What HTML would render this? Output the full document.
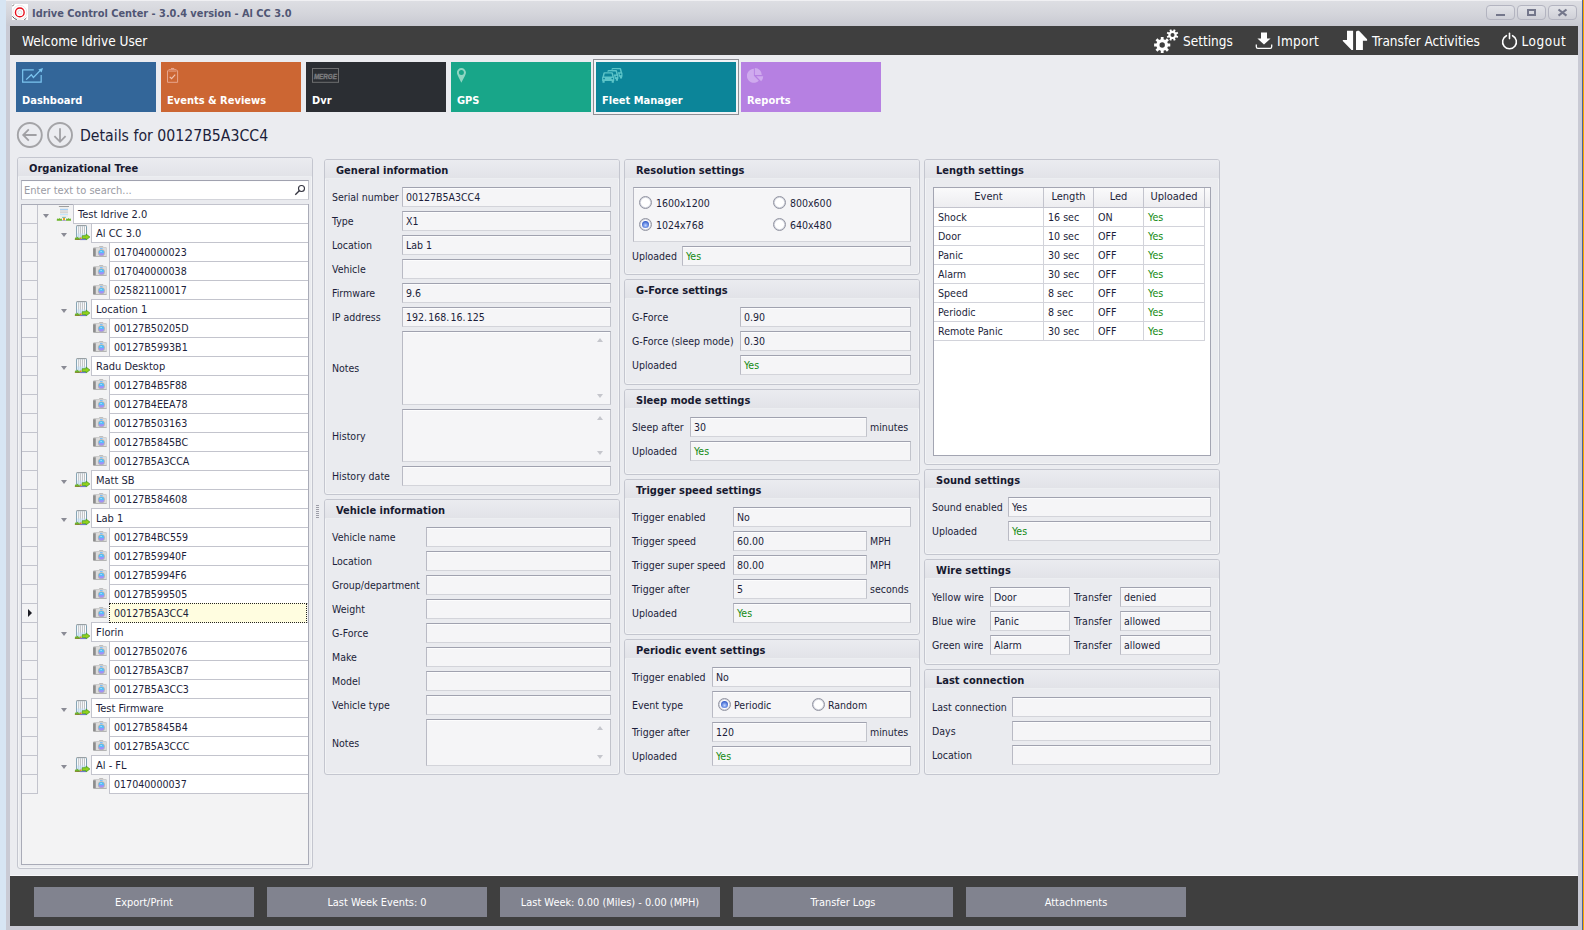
<!DOCTYPE html>
<html lang="en"><head><meta charset="utf-8"><title>Idrive Control Center</title>
<style>
*{box-sizing:border-box}
html,body{margin:0;padding:0}
body{width:1584px;height:930px;overflow:hidden;background:#d7e5f3;position:relative;font-family:'DejaVu Sans Condensed','Liberation Sans',sans-serif;font-size:10.5px;color:#1c1e3a;-webkit-font-smoothing:antialiased}
.abs,.abs *{position:absolute}
#win{position:absolute;left:6px;top:0;width:1576px;height:930px;background:#c9cad4}
#titlebar{position:absolute;left:6px;top:0;width:1576px;height:26px;background:linear-gradient(#f0f0f3 0,#f0f0f3 1px,#dddee3 1px,#d4d5db 14px,#c8c9d1 26px)}
#edgeR1{position:absolute;left:1582px;top:0;width:1px;height:930px;background:#51649a}
#edgeR2{position:absolute;left:1583px;top:0;width:1px;height:930px;background:#f7a800}
#title{position:absolute;left:32px;top:6px;height:16px;line-height:16px;font-weight:bold;font-size:10.9px;color:#505674;white-space:nowrap}
.wb{position:absolute;top:5px;width:29px;height:15px;border:1px solid #b3b4c0;border-radius:4px;background:linear-gradient(#e2e3e8,#cfd0d7)}
#hdr{position:absolute;left:10px;top:26px;width:1568px;height:29px;background:#3f3f3f}
#hdr span{position:absolute;color:#fff;font-size:13.5px;line-height:20px;top:5px;white-space:nowrap}
#content{position:absolute;left:10px;top:55px;width:1568px;height:821px;background:#ebecf0;border-bottom:1px solid #f7f7fa}
#foot{position:absolute;left:10px;top:876px;width:1568px;height:50px;background:#3f3f3f}
.fb{position:absolute;top:11px;width:220px;height:30px;background:#81838f;color:#fff;text-align:center;line-height:32px;font-size:10.9px;white-space:nowrap}
.tile{position:absolute;top:62px;width:140px;height:50px}
.tile b{position:absolute;left:6px;top:31px;line-height:16px;color:#fff;font-size:11px;white-space:nowrap}
.tile svg{position:absolute;left:6px;top:5px}
.panel{position:absolute;border:1px solid #c4c6cf;border-radius:3px;background:#eaebef;box-shadow:inset 0 0 0 1px rgba(255,255,255,.4)}
.panel>.ph{position:absolute;left:0;top:0;right:0;height:19px;background:linear-gradient(#ebecf0,#e2e3e8);border-radius:2px 2px 0 0;border-bottom:1px solid #eceef1}
.panel>.ph b{position:absolute;left:11px;top:3px;line-height:15px;font-size:11px;white-space:nowrap;color:#17192f}
.l{position:absolute;line-height:20px;height:20px;white-space:nowrap}
.i{position:absolute;height:20px;line-height:18px;padding-left:3px;background:#f5f5f7;border:1px solid #b9bac4;border-top-color:#a0a2af;border-right-color:#c1c3cb;border-bottom-color:#d3d4da;box-shadow:inset 0 1px 0 #fcfcfd;white-space:nowrap;overflow:hidden}
.g{color:#128a12}
.box{position:absolute;background:#f5f5f7;border:1px solid #b9bac4;border-top-color:#a0a2af;border-right-color:#c1c3cb;border-bottom-color:#d3d4da;box-shadow:inset 0 1px 0 #fcfcfd}
.sa{position:absolute;width:0;height:0;border-left:3.500px solid transparent;border-right:3.500px solid transparent}
.sa.u{border-bottom:4px solid #c5c6cc}
.sa.d{border-top:4px solid #c5c6cc}
.radio{position:absolute;width:13px;height:13px;border-radius:50%;border:1px solid #9294a1;background:radial-gradient(circle,#fff 0,#fff 52%,#d3d5de 66%,#dfe0e7 85%,#e9eaee 100%)}
.radio.on::after{content:"";position:absolute;left:2px;top:2px;width:7px;height:7px;border-radius:50%;background:radial-gradient(circle at 50% 62%,#c9d9fa 0,#7fa0ec 30%,#3a62cc 68%,#2b4bb0 100%)}
</style></head>
<body>
<svg width="0" height="0" style="position:absolute"><symbol id="cam" viewBox="0 0 15 13"><defs><linearGradient id="lg" x1="0" y1="0" x2="0" y2="1"><stop offset="0" stop-color="#45c2fa"/><stop offset="0.550" stop-color="#5fbcf8"/><stop offset="0.650" stop-color="#a08ef8"/><stop offset="1" stop-color="#a890f5"/></linearGradient></defs><rect x="6.100" y="0.900" width="4.100" height="2" rx="0.500" fill="#bdbdbd"/><rect x="0.100" y="2.100" width="13.800" height="9.800" rx="1.300" fill="#cdcdcd"/><rect x="3" y="3" width="10.200" height="8" rx="1" fill="#dcdcdc"/><rect x="0.100" y="3.300" width="2.600" height="7.900" fill="#8c8c8c"/><rect x="7" y="3" width="2.600" height="1" fill="#7cc0fb"/><rect x="0.400" y="11.300" width="13.300" height="0.700" fill="#a9a9a9"/><circle cx="8.400" cy="7.800" r="3.500" fill="#b3b3b3"/><circle cx="8.400" cy="7.800" r="2.700" fill="url(#lg)"/><rect x="7.300" y="6.400" width="1.600" height="0.600" fill="#d8f0ff"/></symbol><symbol id="loc" viewBox="0 0 17 16"><rect x="2.600" y="0.700" width="9.900" height="13.600" rx="0.800" fill="#e4f0fc" stroke="#6f94a6" stroke-width="0.900"/><path d="M2.600 0.700H12.500" stroke="#9c9c9c" stroke-width="0.900"/><path d="M3.700 1.400V13.500M5.650 1.400V13.500M7.600 1.400V13.500M9.550 1.400V13.500M11.500 1.400V13.500" stroke="#ffffff" stroke-width="0.900"/><path d="M4.700 1.400V13.500M6.600 1.400V13.500M8.600 1.400V13.500M10.500 1.400V13.500" stroke="#bcbcbc" stroke-width="0.900"/><rect x="3.100" y="8.500" width="8.900" height="5" fill="#bfe0fb" opacity="0.550"/><path d="M6 14.600H12" stroke="#6a6ad0" stroke-width="0.900"/><path d="M0.900 14.800V13.300L1.800 12.200L2.600 13L3.400 11.600L4.400 12.900L5.200 12.300L5.800 13.400V14.800z" fill="#6cb52a"/><path d="M0.900 14.300H5.800V14.900H0.900z" fill="#8a6a20"/><rect x="6" y="12.500" width="1.600" height="1.600" fill="#e88a1c"/><path d="M8.200 10.700H12.100V9.100L15.900 12L12.100 14.900V13.500H8.200z" fill="#93d11b" stroke="#3f9a1b" stroke-width="0.700" stroke-linejoin="round"/></symbol><symbol id="root" viewBox="0 0 16 16"><rect x="4" y="0.800" width="8" height="10.200" fill="#e7e7e7"/><path d="M2.900 0.450H13" stroke="#8f8f8f" stroke-width="0.900"/><path d="M4 3.400H12" stroke="#a2cef6" stroke-width="1.100"/><path d="M4 5H12M4 6.500H12" stroke="#cfcfcf" stroke-width="0.800"/><path d="M4 8.500H12" stroke="#c3e3fa" stroke-width="1.100"/><path d="M4 1.900H12M4 10H12" stroke="#f4f4f4" stroke-width="0.800"/><path d="M6.200 11.400H9.800" stroke="#6fb6b0" stroke-width="1"/><rect x="7" y="12" width="2" height="2.600" fill="#e8a020"/><path d="M0.800 14.800V13.400L1.700 12.300L2.500 13.100L3.400 12L4.300 13.100L5.200 12.300L6 13.400V14.800z" fill="#6cb52a"/><path d="M10 14.800V13.400L10.800 12.300L11.700 13.100L12.600 12L13.500 13.100L14.300 12.300L15 13.400V14.800z" fill="#6cb52a"/><path d="M6 14.500H10" stroke="#9a9ad8" stroke-width="0.700"/></symbol></svg>
<div id="win"></div><div id="titlebar"></div><div id="edgeR1"></div><div id="edgeR2"></div>
<svg style="position:absolute;left:12px;top:4px" width="16" height="16" viewBox="0 0 16 16"><rect width="16" height="16" fill="#fff"/><circle cx="7.800" cy="8.300" r="7" fill="none" stroke="#d6d6d9" stroke-width="0.600"/><path d="M0.300 2.300L1.900 0.500M0.400 12.300Q2.200 15 4.800 15.700M12.300 15.600Q13.600 14.900 14.300 14" fill="none" stroke="#4a4a4a" stroke-width="0.900"/><circle cx="7.800" cy="8.400" r="4.350" fill="none" stroke="#e8101c" stroke-width="1.400"/><circle cx="7.800" cy="8.400" r="1.900" fill="none" stroke="#d3d3d8" stroke-width="0.700"/></svg>
<div id="title">Idrive Control Center - 3.0.4 version - Al CC 3.0</div>
<div class="wb" style="left:1486px"><svg width="27" height="13" style="position:absolute;left:0;top:0"><rect x="9" y="8" width="9" height="2" fill="#74778b"/></svg></div>
<div class="wb" style="left:1517px"><svg width="27" height="13" style="position:absolute;left:0;top:0"><rect x="10" y="4" width="7" height="5" fill="none" stroke="#74778b" stroke-width="2"/></svg></div>
<div class="wb" style="left:1548px"><svg width="27" height="13" style="position:absolute;left:0;top:0"><path d="M9.500 3.500L17.500 9.700M17.500 3.500L9.500 9.700" stroke="#74778b" stroke-width="2.200" fill="none"/></svg></div>
<div id="hdr"><span style="left:12px">Welcome Idrive User</span>
<span style="left:1173px">Settings</span><span style="left:1267px;letter-spacing:0.3px">Import</span><span style="left:1362px">Transfer Activities</span><span style="left:1511.500px;letter-spacing:0.55px">Logout</span>
<svg style="position:absolute;left:1143px;top:2px" width="26" height="26" viewBox="0 0 26 26"><g fill="#fff">
<path fill-rule="evenodd" d="M17.28 15.59 L17.28 18.41 L14.94 18.38 L14.23 20.08 L15.91 21.72 L13.92 23.71 L12.28 22.03 L10.58 22.74 L10.61 25.08 L7.79 25.08 L7.82 22.74 L6.12 22.03 L4.48 23.71 L2.49 21.72 L4.17 20.08 L3.46 18.38 L1.12 18.41 L1.12 15.59 L3.46 15.62 L4.17 13.92 L2.49 12.28 L4.48 10.29 L6.12 11.97 L7.82 11.26 L7.79 8.92 L10.61 8.92 L10.58 11.26 L12.28 11.97 L13.92 10.29 L15.91 12.28 L14.23 13.92 L14.94 15.62Z M6.50 17.00 a2.70 2.70 0 1 0 5.40 0 a2.70 2.70 0 1 0 -5.40 0Z"/>
<path fill-rule="evenodd" d="M25.26 8.19 L24.48 10.06 L22.90 9.37 L21.97 10.30 L22.66 11.88 L20.79 12.66 L20.16 11.05 L18.84 11.05 L18.21 12.66 L16.34 11.88 L17.03 10.30 L16.10 9.37 L14.52 10.06 L13.74 8.19 L15.35 7.56 L15.35 6.24 L13.74 5.61 L14.52 3.74 L16.10 4.43 L17.03 3.50 L16.34 1.92 L18.21 1.14 L18.84 2.75 L20.16 2.75 L20.79 1.14 L22.66 1.92 L21.97 3.50 L22.90 4.43 L24.48 3.74 L25.26 5.61 L23.65 6.24 L23.65 7.56Z M17.50 6.90 a2.00 2.00 0 1 0 4.00 0 a2.00 2.00 0 1 0 -4.00 0Z"/>
</g></svg>
<svg style="position:absolute;left:1245px;top:6px" width="18" height="18" viewBox="0 0 18 18"><path d="M6 0.5h6v6h3.6L9 12.6 2.4 6.5H6z" fill="#fff"/><path d="M1.3 12.5v2.3q0 1.6 1.6 1.6h12.2q1.6 0 1.6-1.6v-2.3" fill="none" stroke="#fff" stroke-width="1.3"/></svg>
<svg style="position:absolute;left:1332px;top:4px" width="26" height="22" viewBox="0 0 26 22"><path d="M5 0.800h6.100V20H9.500L0.800 11V9.900H5z" fill="#fff"/><path d="M14 20V1.500L15.500 0.800H17L25.100 9.300V10.800H20.900V20z" fill="#fff"/></svg>
<svg style="position:absolute;left:1491px;top:6px" width="18" height="18" viewBox="0 0 18 18"><path d="M5.400 3.700A6.900 6.900 0 1 0 11.600 3.700" fill="none" stroke="#fff" stroke-width="1.600" stroke-linecap="round"/><path d="M8.500 1.400v5.200" stroke="#fff" stroke-width="1.600" stroke-linecap="round"/></svg>
</div>
<div id="content"></div>
<div style="position:absolute;left:593px;top:59px;width:146px;height:56px;border:1px solid #8d8e94;background:#f2f3f6"></div>
<div class="tile" style="left:16px;background:#336699"><svg width="24" height="18" viewBox="0 0 24 18"><path d="M11.800 2.800H0.660V15.200H19.160V8" fill="none" stroke="#7cc5f0" stroke-width="1.200"/><path d="M4.200 12.600L9.300 7.700L11.400 10.500L18.600 3.100" fill="none" stroke="#7cc5f0" stroke-width="1.300"/><path d="M21 0.900L16.300 2.400L19.600 5.400z" fill="#7cc5f0"/></svg><b>Dashboard</b></div>
<div class="tile" style="left:161px;background:#cc6633"><svg width="14" height="18" viewBox="0 0 14 18"><path d="M1.800 2.700H9.300L10.600 4V15.300H0.500V4z" fill="none" stroke="#e8a68c" stroke-width="1"/><path d="M1.500 4.100H9.600" stroke="#e8a68c" stroke-width="0.900"/><path d="M4 1.500H7.200" stroke="#e8a68c" stroke-width="1.100"/><path d="M2.700 9.800L4.600 11.700L8.200 7.700" fill="none" stroke="#f0c3b0" stroke-width="1.200"/></svg><b>Events &amp; Reviews</b></div>
<div class="tile" style="left:306px;background:#2b2e33"><svg width="28" height="18" viewBox="0 0 28 18"><rect x="0.500" y="1.500" width="26" height="13.800" fill="none" stroke="#6d6e70" stroke-width="1"/><text x="13.400" y="12" text-anchor="middle" font-family="'Liberation Sans',sans-serif" font-size="6.800" font-style="italic" font-weight="bold" fill="#7b7c7f" stroke="#7b7c7f" stroke-width="0.350" textLength="23" lengthAdjust="spacingAndGlyphs">MERGE</text></svg><b>Dvr</b></div>
<div class="tile" style="left:451px;background:#18a689"><svg width="12" height="18" viewBox="0 0 12 18"><path fill-rule="evenodd" d="M4.400 1.050A4.550 4.550 0 0 1 8.950 5.600C8.950 7.600 6.600 11.400 4.400 15.800C2.200 11.400 -0.150 7.600 -0.150 5.600A4.550 4.550 0 0 1 4.400 1.050zM4.400 3.100a2.500 2.500 0 1 0 0 5a2.500 2.500 0 1 0 0-5z" fill="#8fd6c2"/></svg><b>GPS</b></div>
<div class="tile" style="left:596px;background:#0c8599"><svg width="24" height="18" viewBox="0 0 24 18"><g transform="translate(8.300 1)"><path d="M2.300 0H9.900Q10.700 0 10.900 0.800L11.700 4.200Q12.200 4.500 12.200 5.400V8.800H11.800V10.600H9.600V8.800H2.600V10.600H0.400V8.800H0V5.400Q0 4.500 0.500 4.200L1.300 0.800Q1.500 0 2.300 0z" fill="#0c8599" stroke="#0c8599" stroke-width="1"/><path fill-rule="evenodd" fill="#5cc4c8" d="M2.300 0H9.900Q10.700 0 10.900 0.800L11.700 4.200Q12.200 4.500 12.200 5.400V8.800H11.800V10.600H9.600V8.800H2.600V10.600H0.400V8.800H0V5.400Q0 4.500 0.500 4.200L1.300 0.800Q1.500 0 2.300 0zM2.700 1.300L2 4.300H10.200L9.500 1.300zM1.100 6.400a0.900 0.800 0 1 0 1.800 0a0.900 0.800 0 1 0 -1.800 0zM9.300 6.400a0.900 0.800 0 1 0 1.800 0a0.900 0.800 0 1 0 -1.800 0z"/></g><g transform="translate(4.200 3.100)"><path d="M2.300 0H9.900Q10.700 0 10.900 0.800L11.700 4.200Q12.200 4.500 12.200 5.400V8.800H11.800V10.600H9.600V8.800H2.600V10.600H0.400V8.800H0V5.400Q0 4.500 0.500 4.200L1.300 0.800Q1.500 0 2.300 0z" fill="#0c8599" stroke="#0c8599" stroke-width="1"/><path fill-rule="evenodd" fill="#5cc4c8" d="M2.300 0H9.900Q10.700 0 10.900 0.800L11.700 4.200Q12.200 4.500 12.200 5.400V8.800H11.800V10.600H9.600V8.800H2.600V10.600H0.400V8.800H0V5.400Q0 4.500 0.500 4.200L1.300 0.800Q1.500 0 2.300 0zM2.700 1.300L2 4.300H10.200L9.500 1.300zM1.100 6.400a0.900 0.800 0 1 0 1.800 0a0.900 0.800 0 1 0 -1.800 0zM9.300 6.400a0.900 0.800 0 1 0 1.800 0a0.900 0.800 0 1 0 -1.800 0z"/></g><g transform="translate(0.060 5.200)"><path d="M2.300 0H9.900Q10.700 0 10.900 0.800L11.700 4.200Q12.200 4.500 12.200 5.400V8.800H11.800V10.600H9.600V8.800H2.600V10.600H0.400V8.800H0V5.400Q0 4.500 0.500 4.200L1.300 0.800Q1.500 0 2.300 0z" fill="#0c8599" stroke="#0c8599" stroke-width="1"/><path fill-rule="evenodd" fill="#5cc4c8" d="M2.300 0H9.900Q10.700 0 10.900 0.800L11.700 4.200Q12.200 4.500 12.200 5.400V8.800H11.800V10.600H9.600V8.800H2.600V10.600H0.400V8.800H0V5.400Q0 4.500 0.500 4.200L1.300 0.800Q1.500 0 2.300 0zM2.700 1.300L2 4.300H10.200L9.500 1.300zM1.100 6.400a0.900 0.800 0 1 0 1.800 0a0.900 0.800 0 1 0 -1.800 0zM9.300 6.400a0.900 0.800 0 1 0 1.800 0a0.900 0.800 0 1 0 -1.800 0z"/></g></svg><b>Fleet Manager</b></div>
<div class="tile" style="left:741px;background:#b680e2"><svg width="20" height="18" viewBox="0 0 20 18"><g fill="#cfaaee"><path d="M6.900 8.800V1.800A7 7 0 1 0 11.850 13.750z"/><path d="M7.800 7.900V0.900A7 7 0 0 1 14.800 7.900z"/><path d="M9.200 9.200H16.200A7 7 0 0 1 14.150 14.150z"/></g></svg><b>Reports</b></div>
<svg style="position:absolute;left:16px;top:121px" width="58" height="28" viewBox="0 0 58 28"><g fill="none" stroke="#a4a4a7" stroke-width="1.900"><circle cx="13.800" cy="14" r="12"/><circle cx="44" cy="14" r="12"/></g><g fill="none" stroke="#a0a0a4" stroke-width="1.800"><path d="M20.600 14H7.400M12.800 8.400L7.200 14l5.600 5.600"/><path d="M44 7.200v13.400M38.400 15.200L44 20.800l5.600-5.600"/></g></svg>
<div style="position:absolute;left:80px;top:125px;line-height:22px;font-size:15.7px;white-space:nowrap;color:#1c1e3a" id="details">Details for 00127B5A3CC4</div>
<div class="panel" style="left:17px;top:157px;width:296px;height:712px"><div class="ph"><b>Organizational Tree</b></div></div>
<div class="box" style="left:21px;top:180px;width:288px;height:20px;background:#fff"></div>
<div class="l" style="left:24px;top:181px;color:#9a9ba4;font-size:11px">Enter text to search...</div>
<svg style="position:absolute;left:294px;top:184px" width="12" height="12" viewBox="0 0 12 12"><circle cx="7.500" cy="4.500" r="3" fill="none" stroke="#33333f" stroke-width="1.100"/><path d="M5.300 6.800L1.300 10.800" stroke="#33333f" stroke-width="1.300"/></svg>
<div style="position:absolute;left:21px;top:204px;width:288px;height:661px;background:#f3f3f4;border:1px solid #a9abb7"></div>
<div style="position:absolute;left:22px;top:205px;width:16px;height:19px;border-right:1px solid #c3c4cd;border-bottom:1px solid #c3c4cd;background:#f3f3f5"></div>
<div style="position:absolute;left:73px;top:204px;width:235px;height:20px;background:#fff;border:1px solid #c3c4cd;border-right:none;line-height:20px;padding-left:4px;white-space:nowrap;font-size:11px">Test Idrive 2.0</div>
<svg style="position:absolute;left:56px;top:206px" width="16" height="16"><use href="#root"/></svg>
<div style="position:absolute;left:43px;top:214px;width:0;height:0;border-left:3.500px solid transparent;border-right:3.500px solid transparent;border-top:4px solid #8a8b95"></div>
<div style="position:absolute;left:22px;top:224px;width:16px;height:19px;border-right:1px solid #c3c4cd;border-bottom:1px solid #c3c4cd;background:#f3f3f5"></div>
<div style="position:absolute;left:91px;top:223px;width:217px;height:20px;background:#fff;border:1px solid #c3c4cd;border-right:none;line-height:20px;padding-left:4px;white-space:nowrap;font-size:11px">Al CC 3.0</div>
<svg style="position:absolute;left:74px;top:225px" width="17" height="16"><use href="#loc"/></svg>
<div style="position:absolute;left:61px;top:233px;width:0;height:0;border-left:3.500px solid transparent;border-right:3.500px solid transparent;border-top:4px solid #8a8b95"></div>
<div style="position:absolute;left:22px;top:243px;width:16px;height:19px;border-right:1px solid #c3c4cd;border-bottom:1px solid #c3c4cd;background:#f3f3f5"></div>
<div style="position:absolute;left:109px;top:242px;width:199px;height:20px;background:#fff;border:1px solid #c3c4cd;border-right:none;line-height:18px;padding-left:4px;white-space:nowrap;font-size:10.6px">017040000023</div>
<svg style="position:absolute;left:93px;top:245px" width="15" height="13"><use href="#cam"/></svg>
<div style="position:absolute;left:22px;top:262px;width:16px;height:19px;border-right:1px solid #c3c4cd;border-bottom:1px solid #c3c4cd;background:#f3f3f5"></div>
<div style="position:absolute;left:109px;top:261px;width:199px;height:20px;background:#fff;border:1px solid #c3c4cd;border-right:none;line-height:18px;padding-left:4px;white-space:nowrap;font-size:10.6px">017040000038</div>
<svg style="position:absolute;left:93px;top:264px" width="15" height="13"><use href="#cam"/></svg>
<div style="position:absolute;left:22px;top:281px;width:16px;height:19px;border-right:1px solid #c3c4cd;border-bottom:1px solid #c3c4cd;background:#f3f3f5"></div>
<div style="position:absolute;left:109px;top:280px;width:199px;height:20px;background:#fff;border:1px solid #c3c4cd;border-right:none;line-height:18px;padding-left:4px;white-space:nowrap;font-size:10.6px">025821100017</div>
<svg style="position:absolute;left:93px;top:283px" width="15" height="13"><use href="#cam"/></svg>
<div style="position:absolute;left:22px;top:300px;width:16px;height:19px;border-right:1px solid #c3c4cd;border-bottom:1px solid #c3c4cd;background:#f3f3f5"></div>
<div style="position:absolute;left:91px;top:299px;width:217px;height:20px;background:#fff;border:1px solid #c3c4cd;border-right:none;line-height:20px;padding-left:4px;white-space:nowrap;font-size:11px">Location 1</div>
<svg style="position:absolute;left:74px;top:301px" width="17" height="16"><use href="#loc"/></svg>
<div style="position:absolute;left:61px;top:309px;width:0;height:0;border-left:3.500px solid transparent;border-right:3.500px solid transparent;border-top:4px solid #8a8b95"></div>
<div style="position:absolute;left:22px;top:319px;width:16px;height:19px;border-right:1px solid #c3c4cd;border-bottom:1px solid #c3c4cd;background:#f3f3f5"></div>
<div style="position:absolute;left:109px;top:318px;width:199px;height:20px;background:#fff;border:1px solid #c3c4cd;border-right:none;line-height:18px;padding-left:4px;white-space:nowrap;font-size:10.6px">00127B50205D</div>
<svg style="position:absolute;left:93px;top:321px" width="15" height="13"><use href="#cam"/></svg>
<div style="position:absolute;left:22px;top:338px;width:16px;height:19px;border-right:1px solid #c3c4cd;border-bottom:1px solid #c3c4cd;background:#f3f3f5"></div>
<div style="position:absolute;left:109px;top:337px;width:199px;height:20px;background:#fff;border:1px solid #c3c4cd;border-right:none;line-height:18px;padding-left:4px;white-space:nowrap;font-size:10.6px">00127B5993B1</div>
<svg style="position:absolute;left:93px;top:340px" width="15" height="13"><use href="#cam"/></svg>
<div style="position:absolute;left:22px;top:357px;width:16px;height:19px;border-right:1px solid #c3c4cd;border-bottom:1px solid #c3c4cd;background:#f3f3f5"></div>
<div style="position:absolute;left:91px;top:356px;width:217px;height:20px;background:#fff;border:1px solid #c3c4cd;border-right:none;line-height:20px;padding-left:4px;white-space:nowrap;font-size:11px">Radu Desktop</div>
<svg style="position:absolute;left:74px;top:358px" width="17" height="16"><use href="#loc"/></svg>
<div style="position:absolute;left:61px;top:366px;width:0;height:0;border-left:3.500px solid transparent;border-right:3.500px solid transparent;border-top:4px solid #8a8b95"></div>
<div style="position:absolute;left:22px;top:376px;width:16px;height:19px;border-right:1px solid #c3c4cd;border-bottom:1px solid #c3c4cd;background:#f3f3f5"></div>
<div style="position:absolute;left:109px;top:375px;width:199px;height:20px;background:#fff;border:1px solid #c3c4cd;border-right:none;line-height:18px;padding-left:4px;white-space:nowrap;font-size:10.6px">00127B4B5F88</div>
<svg style="position:absolute;left:93px;top:378px" width="15" height="13"><use href="#cam"/></svg>
<div style="position:absolute;left:22px;top:395px;width:16px;height:19px;border-right:1px solid #c3c4cd;border-bottom:1px solid #c3c4cd;background:#f3f3f5"></div>
<div style="position:absolute;left:109px;top:394px;width:199px;height:20px;background:#fff;border:1px solid #c3c4cd;border-right:none;line-height:18px;padding-left:4px;white-space:nowrap;font-size:10.6px">00127B4EEA78</div>
<svg style="position:absolute;left:93px;top:397px" width="15" height="13"><use href="#cam"/></svg>
<div style="position:absolute;left:22px;top:414px;width:16px;height:19px;border-right:1px solid #c3c4cd;border-bottom:1px solid #c3c4cd;background:#f3f3f5"></div>
<div style="position:absolute;left:109px;top:413px;width:199px;height:20px;background:#fff;border:1px solid #c3c4cd;border-right:none;line-height:18px;padding-left:4px;white-space:nowrap;font-size:10.6px">00127B503163</div>
<svg style="position:absolute;left:93px;top:416px" width="15" height="13"><use href="#cam"/></svg>
<div style="position:absolute;left:22px;top:433px;width:16px;height:19px;border-right:1px solid #c3c4cd;border-bottom:1px solid #c3c4cd;background:#f3f3f5"></div>
<div style="position:absolute;left:109px;top:432px;width:199px;height:20px;background:#fff;border:1px solid #c3c4cd;border-right:none;line-height:18px;padding-left:4px;white-space:nowrap;font-size:10.6px">00127B5845BC</div>
<svg style="position:absolute;left:93px;top:435px" width="15" height="13"><use href="#cam"/></svg>
<div style="position:absolute;left:22px;top:452px;width:16px;height:19px;border-right:1px solid #c3c4cd;border-bottom:1px solid #c3c4cd;background:#f3f3f5"></div>
<div style="position:absolute;left:109px;top:451px;width:199px;height:20px;background:#fff;border:1px solid #c3c4cd;border-right:none;line-height:18px;padding-left:4px;white-space:nowrap;font-size:10.6px">00127B5A3CCA</div>
<svg style="position:absolute;left:93px;top:454px" width="15" height="13"><use href="#cam"/></svg>
<div style="position:absolute;left:22px;top:471px;width:16px;height:19px;border-right:1px solid #c3c4cd;border-bottom:1px solid #c3c4cd;background:#f3f3f5"></div>
<div style="position:absolute;left:91px;top:470px;width:217px;height:20px;background:#fff;border:1px solid #c3c4cd;border-right:none;line-height:20px;padding-left:4px;white-space:nowrap;font-size:11px">Matt SB</div>
<svg style="position:absolute;left:74px;top:472px" width="17" height="16"><use href="#loc"/></svg>
<div style="position:absolute;left:61px;top:480px;width:0;height:0;border-left:3.500px solid transparent;border-right:3.500px solid transparent;border-top:4px solid #8a8b95"></div>
<div style="position:absolute;left:22px;top:490px;width:16px;height:19px;border-right:1px solid #c3c4cd;border-bottom:1px solid #c3c4cd;background:#f3f3f5"></div>
<div style="position:absolute;left:109px;top:489px;width:199px;height:20px;background:#fff;border:1px solid #c3c4cd;border-right:none;line-height:18px;padding-left:4px;white-space:nowrap;font-size:10.6px">00127B584608</div>
<svg style="position:absolute;left:93px;top:492px" width="15" height="13"><use href="#cam"/></svg>
<div style="position:absolute;left:22px;top:509px;width:16px;height:19px;border-right:1px solid #c3c4cd;border-bottom:1px solid #c3c4cd;background:#f3f3f5"></div>
<div style="position:absolute;left:91px;top:508px;width:217px;height:20px;background:#fff;border:1px solid #c3c4cd;border-right:none;line-height:20px;padding-left:4px;white-space:nowrap;font-size:11px">Lab 1</div>
<svg style="position:absolute;left:74px;top:510px" width="17" height="16"><use href="#loc"/></svg>
<div style="position:absolute;left:61px;top:518px;width:0;height:0;border-left:3.500px solid transparent;border-right:3.500px solid transparent;border-top:4px solid #8a8b95"></div>
<div style="position:absolute;left:22px;top:528px;width:16px;height:19px;border-right:1px solid #c3c4cd;border-bottom:1px solid #c3c4cd;background:#f3f3f5"></div>
<div style="position:absolute;left:109px;top:527px;width:199px;height:20px;background:#fff;border:1px solid #c3c4cd;border-right:none;line-height:18px;padding-left:4px;white-space:nowrap;font-size:10.6px">00127B4BC559</div>
<svg style="position:absolute;left:93px;top:530px" width="15" height="13"><use href="#cam"/></svg>
<div style="position:absolute;left:22px;top:547px;width:16px;height:19px;border-right:1px solid #c3c4cd;border-bottom:1px solid #c3c4cd;background:#f3f3f5"></div>
<div style="position:absolute;left:109px;top:546px;width:199px;height:20px;background:#fff;border:1px solid #c3c4cd;border-right:none;line-height:18px;padding-left:4px;white-space:nowrap;font-size:10.6px">00127B59940F</div>
<svg style="position:absolute;left:93px;top:549px" width="15" height="13"><use href="#cam"/></svg>
<div style="position:absolute;left:22px;top:566px;width:16px;height:19px;border-right:1px solid #c3c4cd;border-bottom:1px solid #c3c4cd;background:#f3f3f5"></div>
<div style="position:absolute;left:109px;top:565px;width:199px;height:20px;background:#fff;border:1px solid #c3c4cd;border-right:none;line-height:18px;padding-left:4px;white-space:nowrap;font-size:10.6px">00127B5994F6</div>
<svg style="position:absolute;left:93px;top:568px" width="15" height="13"><use href="#cam"/></svg>
<div style="position:absolute;left:22px;top:585px;width:16px;height:19px;border-right:1px solid #c3c4cd;border-bottom:1px solid #c3c4cd;background:#f3f3f5"></div>
<div style="position:absolute;left:109px;top:584px;width:199px;height:20px;background:#fff;border:1px solid #c3c4cd;border-right:none;line-height:18px;padding-left:4px;white-space:nowrap;font-size:10.6px">00127B599505</div>
<svg style="position:absolute;left:93px;top:587px" width="15" height="13"><use href="#cam"/></svg>
<div style="position:absolute;left:22px;top:604px;width:16px;height:19px;border-right:1px solid #c3c4cd;border-bottom:1px solid #c3c4cd;background:#f3f3f5"></div>
<div style="position:absolute;left:28px;top:609px;width:0;height:0;border-top:4px solid transparent;border-bottom:4px solid transparent;border-left:4px solid #1c1c24"></div>
<div style="position:absolute;left:109px;top:603px;width:198px;height:20px;background:#fffde0;border:1px dotted #222;z-index:2;line-height:18px;padding-left:4px;white-space:nowrap;font-size:10.6px">00127B5A3CC4</div>
<svg style="position:absolute;left:93px;top:606px" width="15" height="13"><use href="#cam"/></svg>
<div style="position:absolute;left:22px;top:623px;width:16px;height:19px;border-right:1px solid #c3c4cd;border-bottom:1px solid #c3c4cd;background:#f3f3f5"></div>
<div style="position:absolute;left:91px;top:622px;width:217px;height:20px;background:#fff;border:1px solid #c3c4cd;border-right:none;line-height:20px;padding-left:4px;white-space:nowrap;font-size:11px">Florin</div>
<svg style="position:absolute;left:74px;top:624px" width="17" height="16"><use href="#loc"/></svg>
<div style="position:absolute;left:61px;top:632px;width:0;height:0;border-left:3.500px solid transparent;border-right:3.500px solid transparent;border-top:4px solid #8a8b95"></div>
<div style="position:absolute;left:22px;top:642px;width:16px;height:19px;border-right:1px solid #c3c4cd;border-bottom:1px solid #c3c4cd;background:#f3f3f5"></div>
<div style="position:absolute;left:109px;top:641px;width:199px;height:20px;background:#fff;border:1px solid #c3c4cd;border-right:none;line-height:18px;padding-left:4px;white-space:nowrap;font-size:10.6px">00127B502076</div>
<svg style="position:absolute;left:93px;top:644px" width="15" height="13"><use href="#cam"/></svg>
<div style="position:absolute;left:22px;top:661px;width:16px;height:19px;border-right:1px solid #c3c4cd;border-bottom:1px solid #c3c4cd;background:#f3f3f5"></div>
<div style="position:absolute;left:109px;top:660px;width:199px;height:20px;background:#fff;border:1px solid #c3c4cd;border-right:none;line-height:18px;padding-left:4px;white-space:nowrap;font-size:10.6px">00127B5A3CB7</div>
<svg style="position:absolute;left:93px;top:663px" width="15" height="13"><use href="#cam"/></svg>
<div style="position:absolute;left:22px;top:680px;width:16px;height:19px;border-right:1px solid #c3c4cd;border-bottom:1px solid #c3c4cd;background:#f3f3f5"></div>
<div style="position:absolute;left:109px;top:679px;width:199px;height:20px;background:#fff;border:1px solid #c3c4cd;border-right:none;line-height:18px;padding-left:4px;white-space:nowrap;font-size:10.6px">00127B5A3CC3</div>
<svg style="position:absolute;left:93px;top:682px" width="15" height="13"><use href="#cam"/></svg>
<div style="position:absolute;left:22px;top:699px;width:16px;height:19px;border-right:1px solid #c3c4cd;border-bottom:1px solid #c3c4cd;background:#f3f3f5"></div>
<div style="position:absolute;left:91px;top:698px;width:217px;height:20px;background:#fff;border:1px solid #c3c4cd;border-right:none;line-height:20px;padding-left:4px;white-space:nowrap;font-size:11px">Test Firmware</div>
<svg style="position:absolute;left:74px;top:700px" width="17" height="16"><use href="#loc"/></svg>
<div style="position:absolute;left:61px;top:708px;width:0;height:0;border-left:3.500px solid transparent;border-right:3.500px solid transparent;border-top:4px solid #8a8b95"></div>
<div style="position:absolute;left:22px;top:718px;width:16px;height:19px;border-right:1px solid #c3c4cd;border-bottom:1px solid #c3c4cd;background:#f3f3f5"></div>
<div style="position:absolute;left:109px;top:717px;width:199px;height:20px;background:#fff;border:1px solid #c3c4cd;border-right:none;line-height:18px;padding-left:4px;white-space:nowrap;font-size:10.6px">00127B5845B4</div>
<svg style="position:absolute;left:93px;top:720px" width="15" height="13"><use href="#cam"/></svg>
<div style="position:absolute;left:22px;top:737px;width:16px;height:19px;border-right:1px solid #c3c4cd;border-bottom:1px solid #c3c4cd;background:#f3f3f5"></div>
<div style="position:absolute;left:109px;top:736px;width:199px;height:20px;background:#fff;border:1px solid #c3c4cd;border-right:none;line-height:18px;padding-left:4px;white-space:nowrap;font-size:10.6px">00127B5A3CCC</div>
<svg style="position:absolute;left:93px;top:739px" width="15" height="13"><use href="#cam"/></svg>
<div style="position:absolute;left:22px;top:756px;width:16px;height:19px;border-right:1px solid #c3c4cd;border-bottom:1px solid #c3c4cd;background:#f3f3f5"></div>
<div style="position:absolute;left:91px;top:755px;width:217px;height:20px;background:#fff;border:1px solid #c3c4cd;border-right:none;line-height:20px;padding-left:4px;white-space:nowrap;font-size:11px">Al - FL</div>
<svg style="position:absolute;left:74px;top:757px" width="17" height="16"><use href="#loc"/></svg>
<div style="position:absolute;left:61px;top:765px;width:0;height:0;border-left:3.500px solid transparent;border-right:3.500px solid transparent;border-top:4px solid #8a8b95"></div>
<div style="position:absolute;left:22px;top:775px;width:16px;height:19px;border-right:1px solid #c3c4cd;border-bottom:1px solid #c3c4cd;background:#f3f3f5"></div>
<div style="position:absolute;left:109px;top:774px;width:199px;height:20px;background:#fff;border:1px solid #c3c4cd;border-right:none;line-height:18px;padding-left:4px;white-space:nowrap;font-size:10.6px">017040000037</div>
<svg style="position:absolute;left:93px;top:777px" width="15" height="13"><use href="#cam"/></svg>
<div style="position:absolute;left:316px;top:505px;width:3px;height:14px;background:repeating-linear-gradient(#9d9ea8 0,#9d9ea8 1px,transparent 1px,transparent 2px)"></div>
<div class="panel" style="left:324px;top:159px;width:296px;height:336px"><div class="ph"><b>General information</b></div></div>
<div class="l" style="left:332px;top:187px">Serial number</div>
<div class="i" style="left:402px;top:187px;width:209px">00127B5A3CC4</div>
<div class="l" style="left:332px;top:211px">Type</div>
<div class="i" style="left:402px;top:211px;width:209px">X1</div>
<div class="l" style="left:332px;top:235px">Location</div>
<div class="i" style="left:402px;top:235px;width:209px">Lab 1</div>
<div class="l" style="left:332px;top:259px">Vehicle</div>
<div class="i" style="left:402px;top:259px;width:209px"></div>
<div class="l" style="left:332px;top:283px">Firmware</div>
<div class="i" style="left:402px;top:283px;width:209px">9.6</div>
<div class="l" style="left:332px;top:307px">IP address</div>
<div class="i" style="left:402px;top:307px;width:209px">192.<span style="padding-left:1.2px">168.</span><span style="padding-left:1.2px">16.</span><span style="padding-left:1.2px">125</span></div>
<div class="l" style="left:332px;top:358px">Notes</div>
<div class="box" style="left:402px;top:331px;width:209px;height:74px"></div>
<div class="sa u" style="left:597px;top:338px"></div>
<div class="sa d" style="left:597px;top:394px"></div>
<div class="l" style="left:332px;top:426px">History</div>
<div class="box" style="left:402px;top:409px;width:209px;height:53px"></div>
<div class="sa u" style="left:597px;top:416px"></div>
<div class="sa d" style="left:597px;top:451px"></div>
<div class="l" style="left:332px;top:466px">History date</div>
<div class="i" style="left:402px;top:466px;width:209px"></div>
<div class="panel" style="left:324px;top:499px;width:296px;height:276px"><div class="ph"><b>Vehicle information</b></div></div>
<div class="l" style="left:332px;top:527px">Vehicle name</div>
<div class="i" style="left:426px;top:527px;width:185px"></div>
<div class="l" style="left:332px;top:551px">Location</div>
<div class="i" style="left:426px;top:551px;width:185px"></div>
<div class="l" style="left:332px;top:575px">Group/department</div>
<div class="i" style="left:426px;top:575px;width:185px"></div>
<div class="l" style="left:332px;top:599px">Weight</div>
<div class="i" style="left:426px;top:599px;width:185px"></div>
<div class="l" style="left:332px;top:623px">G-Force</div>
<div class="i" style="left:426px;top:623px;width:185px"></div>
<div class="l" style="left:332px;top:647px">Make</div>
<div class="i" style="left:426px;top:647px;width:185px"></div>
<div class="l" style="left:332px;top:671px">Model</div>
<div class="i" style="left:426px;top:671px;width:185px"></div>
<div class="l" style="left:332px;top:695px">Vehicle type</div>
<div class="i" style="left:426px;top:695px;width:185px"></div>
<div class="l" style="left:332px;top:733px">Notes</div>
<div class="box" style="left:426px;top:719px;width:185px;height:47px"></div>
<div class="sa u" style="left:597px;top:726px"></div>
<div class="sa d" style="left:597px;top:755px"></div>
<div class="panel" style="left:624px;top:159px;width:296px;height:116px"><div class="ph"><b>Resolution settings</b></div></div>
<div class="box" style="left:633px;top:187px;width:278px;height:55px"></div>
<div class="radio" style="left:639px;top:196px"></div>
<div class="l" style="left:656px;top:193px">1600x1200</div>
<div class="radio" style="left:773px;top:196px"></div>
<div class="l" style="left:790px;top:193px">800x600</div>
<div class="radio on" style="left:639px;top:218px"></div>
<div class="l" style="left:656px;top:215px">1024x768</div>
<div class="radio" style="left:773px;top:218px"></div>
<div class="l" style="left:790px;top:215px">640x480</div>
<div class="l" style="left:632px;top:246px">Uploaded</div>
<div class="i g" style="left:682px;top:246px;width:229px">Yes</div>
<div class="panel" style="left:624px;top:279px;width:296px;height:106px"><div class="ph"><b>G-Force settings</b></div></div>
<div class="l" style="left:632px;top:307px">G-Force</div>
<div class="i" style="left:740px;top:307px;width:171px">0.90</div>
<div class="l" style="left:632px;top:331px">G-Force (sleep mode)</div>
<div class="i" style="left:740px;top:331px;width:171px">0.30</div>
<div class="l" style="left:632px;top:355px">Uploaded</div>
<div class="i g" style="left:740px;top:355px;width:171px">Yes</div>
<div class="panel" style="left:624px;top:389px;width:296px;height:86px"><div class="ph"><b>Sleep mode settings</b></div></div>
<div class="l" style="left:632px;top:417px">Sleep after</div>
<div class="i" style="left:690px;top:417px;width:177px">30</div>
<div class="l" style="left:870px;top:417px">minutes</div>
<div class="l" style="left:632px;top:441px">Uploaded</div>
<div class="i g" style="left:690px;top:441px;width:221px">Yes</div>
<div class="panel" style="left:624px;top:479px;width:296px;height:156px"><div class="ph"><b>Trigger speed settings</b></div></div>
<div class="l" style="left:632px;top:507px">Trigger enabled</div>
<div class="i" style="left:733px;top:507px;width:178px">No</div>
<div class="l" style="left:632px;top:531px">Trigger speed</div>
<div class="i" style="left:733px;top:531px;width:134px">60.00</div>
<div class="l" style="left:870px;top:531px">MPH</div>
<div class="l" style="left:632px;top:555px">Trigger super speed</div>
<div class="i" style="left:733px;top:555px;width:134px">80.00</div>
<div class="l" style="left:870px;top:555px">MPH</div>
<div class="l" style="left:632px;top:579px">Trigger after</div>
<div class="i" style="left:733px;top:579px;width:134px">5</div>
<div class="l" style="left:870px;top:579px">seconds</div>
<div class="l" style="left:632px;top:603px">Uploaded</div>
<div class="i g" style="left:733px;top:603px;width:178px">Yes</div>
<div class="panel" style="left:624px;top:639px;width:296px;height:136px"><div class="ph"><b>Periodic event settings</b></div></div>
<div class="l" style="left:632px;top:667px">Trigger enabled</div>
<div class="i" style="left:712px;top:667px;width:199px">No</div>
<div class="l" style="left:632px;top:695px">Event type</div>
<div class="box" style="left:712px;top:691px;width:199px;height:27px"></div>
<div class="radio on" style="left:718px;top:698px"></div>
<div class="l" style="left:734px;top:695px">Periodic</div>
<div class="radio" style="left:812px;top:698px"></div>
<div class="l" style="left:828px;top:695px">Random</div>
<div class="l" style="left:632px;top:722px">Trigger after</div>
<div class="i" style="left:712px;top:722px;width:155px">120</div>
<div class="l" style="left:870px;top:722px">minutes</div>
<div class="l" style="left:632px;top:746px">Uploaded</div>
<div class="i g" style="left:712px;top:746px;width:199px">Yes</div>
<div class="panel" style="left:924px;top:159px;width:296px;height:306px"><div class="ph"><b>Length settings</b></div></div>
<div style="position:absolute;left:933px;top:187px;width:278px;height:269px;background:#fff;border:1px solid #a3a5b2"></div>
<div style="position:absolute;left:934px;top:188px;width:276px;height:20px;background:linear-gradient(#fafafb,#ededf0);border-bottom:1px solid #c3c4cd"></div>
<div style="position:absolute;left:934px;top:188px;width:110px;height:20px;border-right:1px solid #c3c4cd;border-bottom:1px solid #c3c4cd;text-align:center;line-height:18px;font-size:11px">Event</div>
<div style="position:absolute;left:1044px;top:188px;width:50px;height:20px;border-right:1px solid #c3c4cd;border-bottom:1px solid #c3c4cd;text-align:center;line-height:18px;font-size:11px">Length</div>
<div style="position:absolute;left:1094px;top:188px;width:50px;height:20px;border-right:1px solid #c3c4cd;border-bottom:1px solid #c3c4cd;text-align:center;line-height:18px;font-size:11px">Led</div>
<div style="position:absolute;left:1144px;top:188px;width:61px;height:20px;border-right:1px solid #c3c4cd;border-bottom:1px solid #c3c4cd;text-align:center;line-height:18px;font-size:11px">Uploaded</div>
<div style="position:absolute;left:934px;top:208px;width:110px;height:19px;border-right:1px solid #d2d3da;border-bottom:1px solid #d2d3da;line-height:19px;padding-left:4px;font-size:10.6px;white-space:nowrap">Shock</div>
<div style="position:absolute;left:1044px;top:208px;width:50px;height:19px;border-right:1px solid #d2d3da;border-bottom:1px solid #d2d3da;line-height:19px;padding-left:4px;font-size:10.6px;white-space:nowrap">16 sec</div>
<div style="position:absolute;left:1094px;top:208px;width:50px;height:19px;border-right:1px solid #d2d3da;border-bottom:1px solid #d2d3da;line-height:19px;padding-left:4px;font-size:10.6px;white-space:nowrap">ON</div>
<div style="position:absolute;left:1144px;top:208px;width:61px;height:19px;border-right:1px solid #d2d3da;border-bottom:1px solid #d2d3da;line-height:19px;padding-left:4px;font-size:10.6px;white-space:nowrap;color:#128a12">Yes</div>
<div style="position:absolute;left:934px;top:227px;width:110px;height:19px;border-right:1px solid #d2d3da;border-bottom:1px solid #d2d3da;line-height:19px;padding-left:4px;font-size:10.6px;white-space:nowrap">Door</div>
<div style="position:absolute;left:1044px;top:227px;width:50px;height:19px;border-right:1px solid #d2d3da;border-bottom:1px solid #d2d3da;line-height:19px;padding-left:4px;font-size:10.6px;white-space:nowrap">10 sec</div>
<div style="position:absolute;left:1094px;top:227px;width:50px;height:19px;border-right:1px solid #d2d3da;border-bottom:1px solid #d2d3da;line-height:19px;padding-left:4px;font-size:10.6px;white-space:nowrap">OFF</div>
<div style="position:absolute;left:1144px;top:227px;width:61px;height:19px;border-right:1px solid #d2d3da;border-bottom:1px solid #d2d3da;line-height:19px;padding-left:4px;font-size:10.6px;white-space:nowrap;color:#128a12">Yes</div>
<div style="position:absolute;left:934px;top:246px;width:110px;height:19px;border-right:1px solid #d2d3da;border-bottom:1px solid #d2d3da;line-height:19px;padding-left:4px;font-size:10.6px;white-space:nowrap">Panic</div>
<div style="position:absolute;left:1044px;top:246px;width:50px;height:19px;border-right:1px solid #d2d3da;border-bottom:1px solid #d2d3da;line-height:19px;padding-left:4px;font-size:10.6px;white-space:nowrap">30 sec</div>
<div style="position:absolute;left:1094px;top:246px;width:50px;height:19px;border-right:1px solid #d2d3da;border-bottom:1px solid #d2d3da;line-height:19px;padding-left:4px;font-size:10.6px;white-space:nowrap">OFF</div>
<div style="position:absolute;left:1144px;top:246px;width:61px;height:19px;border-right:1px solid #d2d3da;border-bottom:1px solid #d2d3da;line-height:19px;padding-left:4px;font-size:10.6px;white-space:nowrap;color:#128a12">Yes</div>
<div style="position:absolute;left:934px;top:265px;width:110px;height:19px;border-right:1px solid #d2d3da;border-bottom:1px solid #d2d3da;line-height:19px;padding-left:4px;font-size:10.6px;white-space:nowrap">Alarm</div>
<div style="position:absolute;left:1044px;top:265px;width:50px;height:19px;border-right:1px solid #d2d3da;border-bottom:1px solid #d2d3da;line-height:19px;padding-left:4px;font-size:10.6px;white-space:nowrap">30 sec</div>
<div style="position:absolute;left:1094px;top:265px;width:50px;height:19px;border-right:1px solid #d2d3da;border-bottom:1px solid #d2d3da;line-height:19px;padding-left:4px;font-size:10.6px;white-space:nowrap">OFF</div>
<div style="position:absolute;left:1144px;top:265px;width:61px;height:19px;border-right:1px solid #d2d3da;border-bottom:1px solid #d2d3da;line-height:19px;padding-left:4px;font-size:10.6px;white-space:nowrap;color:#128a12">Yes</div>
<div style="position:absolute;left:934px;top:284px;width:110px;height:19px;border-right:1px solid #d2d3da;border-bottom:1px solid #d2d3da;line-height:19px;padding-left:4px;font-size:10.6px;white-space:nowrap">Speed</div>
<div style="position:absolute;left:1044px;top:284px;width:50px;height:19px;border-right:1px solid #d2d3da;border-bottom:1px solid #d2d3da;line-height:19px;padding-left:4px;font-size:10.6px;white-space:nowrap">8 sec</div>
<div style="position:absolute;left:1094px;top:284px;width:50px;height:19px;border-right:1px solid #d2d3da;border-bottom:1px solid #d2d3da;line-height:19px;padding-left:4px;font-size:10.6px;white-space:nowrap">OFF</div>
<div style="position:absolute;left:1144px;top:284px;width:61px;height:19px;border-right:1px solid #d2d3da;border-bottom:1px solid #d2d3da;line-height:19px;padding-left:4px;font-size:10.6px;white-space:nowrap;color:#128a12">Yes</div>
<div style="position:absolute;left:934px;top:303px;width:110px;height:19px;border-right:1px solid #d2d3da;border-bottom:1px solid #d2d3da;line-height:19px;padding-left:4px;font-size:10.6px;white-space:nowrap">Periodic</div>
<div style="position:absolute;left:1044px;top:303px;width:50px;height:19px;border-right:1px solid #d2d3da;border-bottom:1px solid #d2d3da;line-height:19px;padding-left:4px;font-size:10.6px;white-space:nowrap">8 sec</div>
<div style="position:absolute;left:1094px;top:303px;width:50px;height:19px;border-right:1px solid #d2d3da;border-bottom:1px solid #d2d3da;line-height:19px;padding-left:4px;font-size:10.6px;white-space:nowrap">OFF</div>
<div style="position:absolute;left:1144px;top:303px;width:61px;height:19px;border-right:1px solid #d2d3da;border-bottom:1px solid #d2d3da;line-height:19px;padding-left:4px;font-size:10.6px;white-space:nowrap;color:#128a12">Yes</div>
<div style="position:absolute;left:934px;top:322px;width:110px;height:19px;border-right:1px solid #d2d3da;border-bottom:1px solid #d2d3da;line-height:19px;padding-left:4px;font-size:10.6px;white-space:nowrap">Remote Panic</div>
<div style="position:absolute;left:1044px;top:322px;width:50px;height:19px;border-right:1px solid #d2d3da;border-bottom:1px solid #d2d3da;line-height:19px;padding-left:4px;font-size:10.6px;white-space:nowrap">30 sec</div>
<div style="position:absolute;left:1094px;top:322px;width:50px;height:19px;border-right:1px solid #d2d3da;border-bottom:1px solid #d2d3da;line-height:19px;padding-left:4px;font-size:10.6px;white-space:nowrap">OFF</div>
<div style="position:absolute;left:1144px;top:322px;width:61px;height:19px;border-right:1px solid #d2d3da;border-bottom:1px solid #d2d3da;line-height:19px;padding-left:4px;font-size:10.6px;white-space:nowrap;color:#128a12">Yes</div>
<div class="panel" style="left:924px;top:469px;width:296px;height:86px"><div class="ph"><b>Sound settings</b></div></div>
<div class="l" style="left:932px;top:497px">Sound enabled</div>
<div class="i" style="left:1008px;top:497px;width:203px">Yes</div>
<div class="l" style="left:932px;top:521px">Uploaded</div>
<div class="i g" style="left:1008px;top:521px;width:203px">Yes</div>
<div class="panel" style="left:924px;top:559px;width:296px;height:106px"><div class="ph"><b>Wire settings</b></div></div>
<div class="l" style="left:932px;top:587px">Yellow wire</div>
<div class="i" style="left:990px;top:587px;width:80px">Door</div>
<div class="l" style="left:1074px;top:587px">Transfer</div>
<div class="i" style="left:1120px;top:587px;width:91px">denied</div>
<div class="l" style="left:932px;top:611px">Blue wire</div>
<div class="i" style="left:990px;top:611px;width:80px">Panic</div>
<div class="l" style="left:1074px;top:611px">Transfer</div>
<div class="i" style="left:1120px;top:611px;width:91px">allowed</div>
<div class="l" style="left:932px;top:635px">Green wire</div>
<div class="i" style="left:990px;top:635px;width:80px">Alarm</div>
<div class="l" style="left:1074px;top:635px">Transfer</div>
<div class="i" style="left:1120px;top:635px;width:91px">allowed</div>
<div class="panel" style="left:924px;top:669px;width:296px;height:106px"><div class="ph"><b>Last connection</b></div></div>
<div class="l" style="left:932px;top:697px">Last connection</div>
<div class="i" style="left:1012px;top:697px;width:199px"></div>
<div class="l" style="left:932px;top:721px">Days</div>
<div class="i" style="left:1012px;top:721px;width:199px"></div>
<div class="l" style="left:932px;top:745px">Location</div>
<div class="i" style="left:1012px;top:745px;width:199px"></div>
<div id="foot">
<div class="fb" style="left:24px">Export/Print</div>
<div class="fb" style="left:257px">Last Week Events: 0</div>
<div class="fb" style="left:490px">Last Week: 0.00 (Miles) - 0.00 (MPH)</div>
<div class="fb" style="left:723px">Transfer Logs</div>
<div class="fb" style="left:956px">Attachments</div>
</div>
</body></html>
